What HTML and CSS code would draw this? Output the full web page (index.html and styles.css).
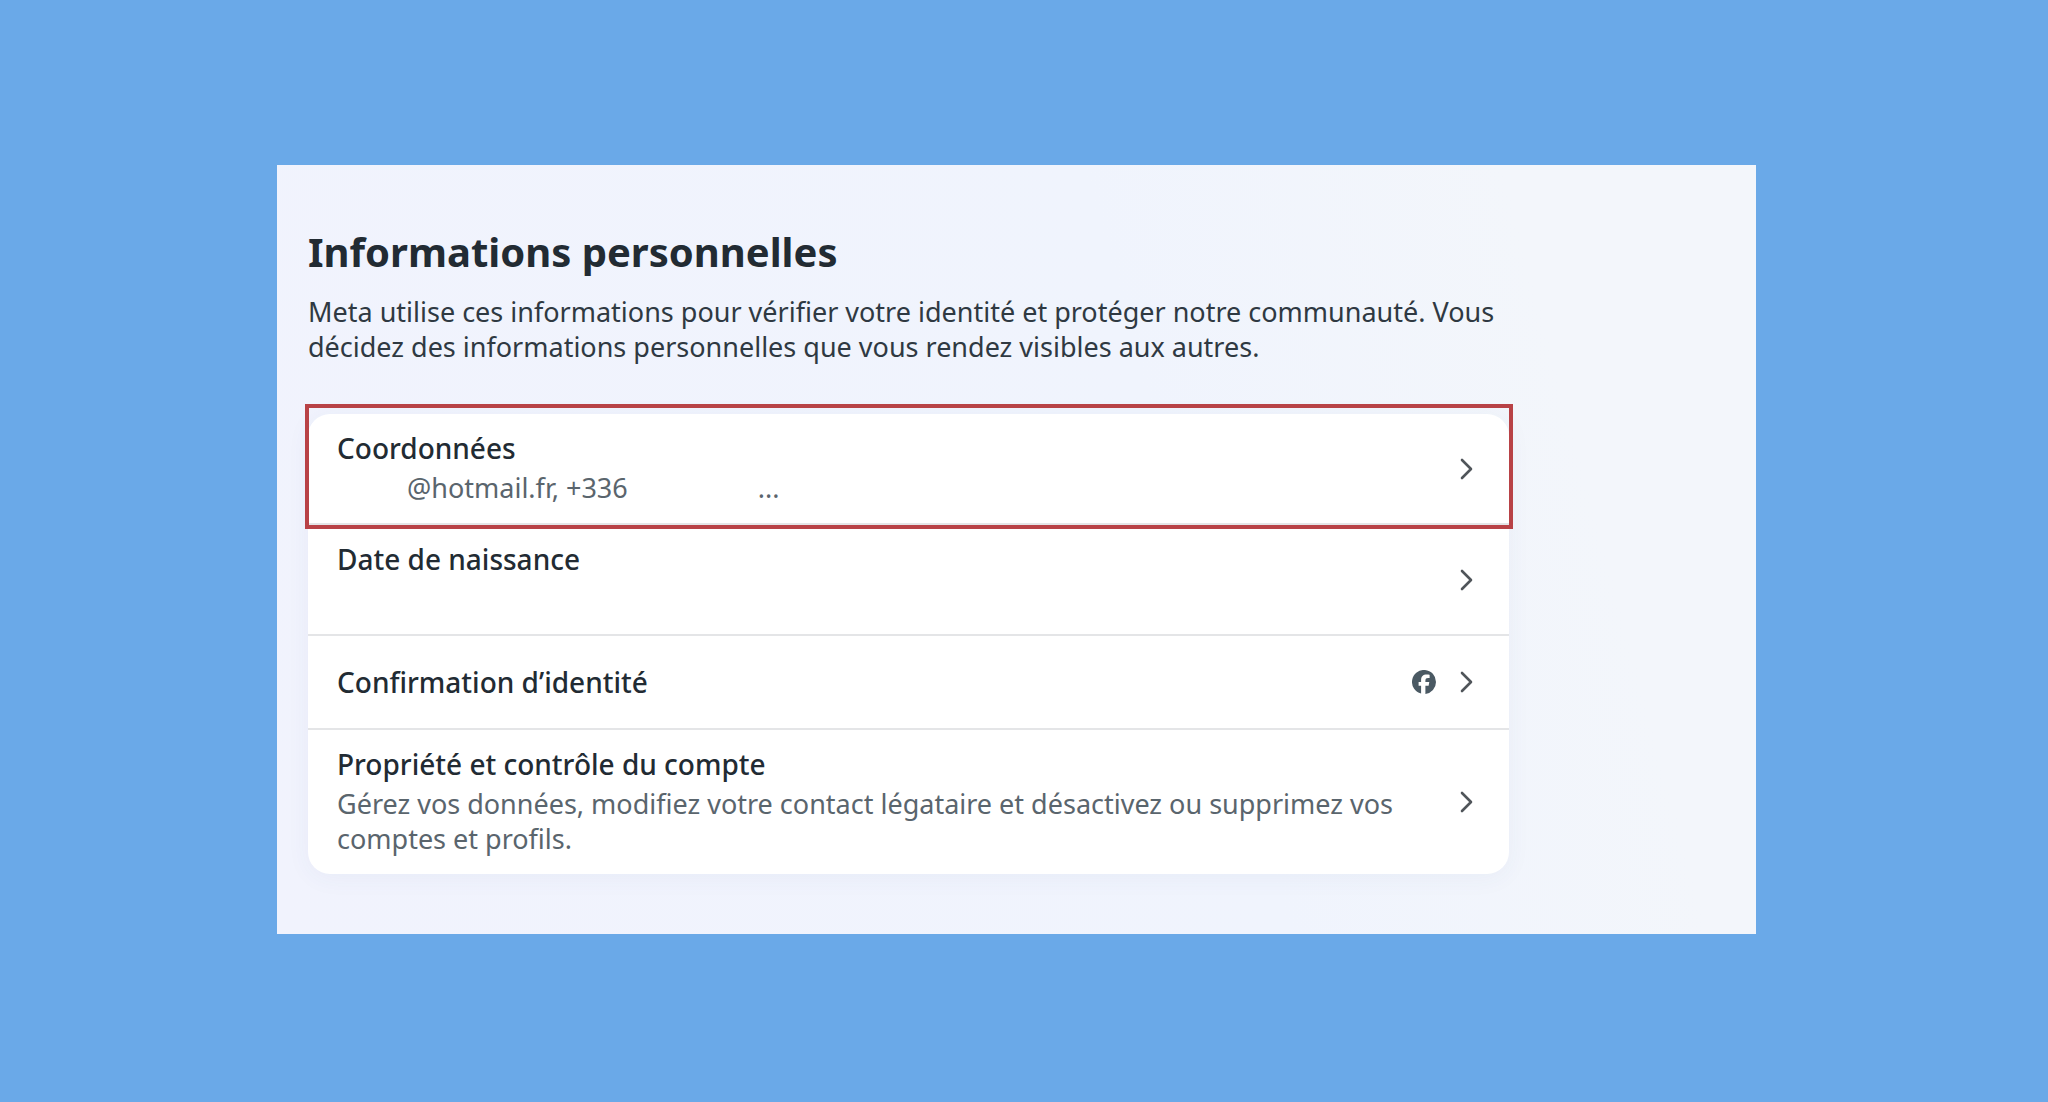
FILE: index.html
```html
<!DOCTYPE html>
<html lang="fr">
<head>
    <meta charset="UTF-8">
    <meta name="viewport" content="width=device-width, initial-scale=1">
    <title>Informations personnelles</title>
    <link rel="stylesheet" href="styles.css">
</head>
<body>
    <main class="panel">
        <div class="content">
            <h1>Informations personnelles</h1>
            <p class="intro">Meta utilise ces informations pour vérifier votre identité et protéger notre communauté. Vous décidez des informations personnelles que vous rendez visibles aux autres.</p>

            <ul class="card">
                <li class="highlight">
                    <a class="row" href="#coordonnees">
                        <span class="text">
                            <span class="title">Coordonnées</span>
                            <span class="details contact"><span>@hotmail.fr, +336</span><span>...</span></span>
                        </span>
                        <svg class="chevron" viewBox="0 0 14 22"><path d="M2 2l9 9-9 9"/></svg>
                    </a>
                </li>
                <li>
                    <a class="row" href="#naissance">
                        <span class="text">
                            <span class="title">Date de naissance</span>
                            <span class="details"></span>
                        </span>
                        <svg class="chevron" viewBox="0 0 14 22"><path d="M2 2l9 9-9 9"/></svg>
                    </a>
                </li>
                <li>
                    <a class="row single" href="#identite">
                        <span class="text">
                            <span class="title">Confirmation d’identité</span>
                        </span>
                        <svg class="facebook" viewBox="0 0 24 24"><path d="M24 12a12 12 0 1 0-14.9 11.6v-7.9H6.6V12h2.5v-1.6c0-4.1 1.8-6 5.9-6 .8 0 2.1.2 2.6.3v3.4c-.3 0-.8 0-1.4 0-2 0-2.8.7-2.8 2.7V12h3.9l-.7 3.7h-3.2v8.2A12 12 0 0 0 24 12z"/></svg>
                        <svg class="chevron" viewBox="0 0 14 22"><path d="M2 2l9 9-9 9"/></svg>
                    </a>
                </li>
                <li>
                    <a class="row" href="#propriete">
                        <span class="text">
                            <span class="title">Propriété et contrôle du compte</span>
                            <span class="details">Gérez vos données, modifiez votre contact légataire et désactivez ou supprimez vos comptes et profils.</span>
                        </span>
                        <svg class="chevron" viewBox="0 0 14 22"><path d="M2 2l9 9-9 9"/></svg>
                    </a>
                </li>
            </ul>
        </div>
    </main>
</body>
</html>
```
FILE: styles.css
```css
* {
    box-sizing: border-box;
}

body {
    margin: 0;
    padding: 165px 292px 168px 277px;
    background-color: #6aa9e8;
    font-family: "Noto Sans", sans-serif;
    color: #222b33;
}

.panel {
    padding: 59px 31px 60px;
    background: linear-gradient(75deg, #f1f3fd 0%, #f0f4fd 60%, #f3f6fb 85%, #f3f6fb 100%);
}

.content {
    max-width: 1201px;
}

h1 {
    margin: 0;
    font-size: 40px;
    line-height: 56px;
    font-weight: 700;
}

.intro {
    margin: 14px 0 50px;
    font-size: 27px;
    line-height: 35px;
    color: #2f3942;
}

.card {
    margin: 0;
    padding: 0;
    list-style: none;
    background-color: #fff;
    border-radius: 22px;
    box-shadow: 0 4px 24px rgba(60, 70, 130, 0.05);
}

.card li + li {
    border-top: 2px solid #e4e5e7;
}

.row {
    display: flex;
    align-items: center;
    gap: 24px;
    padding: 15px 35px 15px 29px;
    color: inherit;
    text-decoration: none;
}

.text {
    flex: 1;
    padding-bottom: 3px;
}

.single {
    padding-top: 27px;
    padding-bottom: 27px;
}

.single .text {
    padding-bottom: 0;
}

.title {
    display: block;
    font-size: 28px;
    line-height: 38px;
    font-weight: 500;
}

.details {
    display: block;
    min-height: 35px;
    margin-top: 3px;
    font-size: 27px;
    line-height: 35px;
    color: #5a656d;
}

.contact {
    display: flex;
    gap: 130px;
    padding-left: 70px;
}

.chevron {
    width: 14px;
    height: 22px;
    fill: none;
    stroke: #50555a;
    stroke-width: 2.6;
    stroke-linecap: round;
    stroke-linejoin: round;
}

.facebook {
    width: 24px;
    height: 24px;
    fill: #4a5963;
}

.highlight {
    position: relative;
}

/* red frame around the contact row */
.highlight::after {
    content: "";
    position: absolute;
    inset: -10px -4px -6px -3px;
    border: 4px solid #b84246;
    pointer-events: none;
}
```
